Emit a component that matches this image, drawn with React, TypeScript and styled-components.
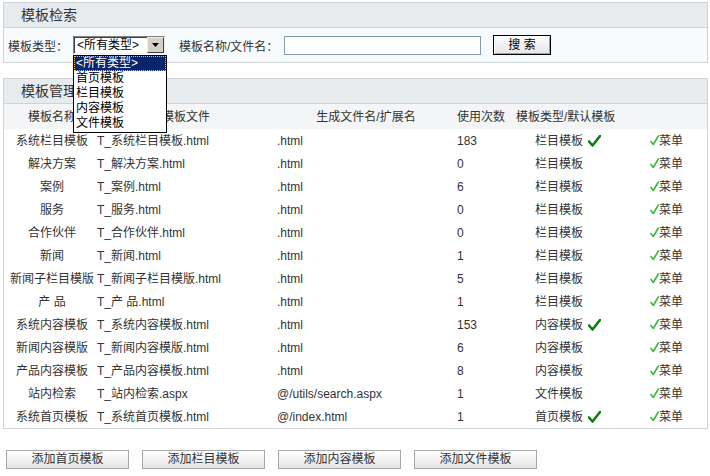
import { FC } from 'react';
import styled, { createGlobalStyle } from 'styled-components';

const GlobalStyle = createGlobalStyle`
  html, body {
    margin: 0;
    padding: 0;
    background: #fff;
  }
  body {
    font-family: 'Liberation Sans', Tahoma, 'Noto Sans CJK SC', sans-serif;
    font-size: 12px;
    color: #333;
  }
  * {
    box-sizing: border-box;
  }
`;

interface Template {
  name: string;
  file: string;
  ext: string;
  count: string;
  type: string;
  isDefault?: boolean;
}

const templates: Template[] = [
  { name: '系统栏目模板', file: 'T_系统栏目模板.html', ext: '.html', count: '183', type: '栏目模板', isDefault: true },
  { name: '解决方案', file: 'T_解决方案.html', ext: '.html', count: '0', type: '栏目模板' },
  { name: '案例', file: 'T_案例.html', ext: '.html', count: '6', type: '栏目模板' },
  { name: '服务', file: 'T_服务.html', ext: '.html', count: '0', type: '栏目模板' },
  { name: '合作伙伴', file: 'T_合作伙伴.html', ext: '.html', count: '0', type: '栏目模板' },
  { name: '新闻', file: 'T_新闻.html', ext: '.html', count: '1', type: '栏目模板' },
  { name: '新闻子栏目模版', file: 'T_新闻子栏目模版.html', ext: '.html', count: '5', type: '栏目模板' },
  { name: '产 品', file: 'T_产 品.html', ext: '.html', count: '1', type: '栏目模板' },
  { name: '系统内容模板', file: 'T_系统内容模板.html', ext: '.html', count: '153', type: '内容模板', isDefault: true },
  { name: '新闻内容模版', file: 'T_新闻内容模版.html', ext: '.html', count: '6', type: '内容模板' },
  { name: '产品内容模板', file: 'T_产品内容模板.html', ext: '.html', count: '8', type: '内容模板' },
  { name: '站内检索', file: 'T_站内检索.aspx', ext: '@/utils/search.aspx', count: '1', type: '文件模板' },
  { name: '系统首页模板', file: 'T_系统首页模板.html', ext: '@/index.html', count: '1', type: '首页模板', isDefault: true },
];

const typeOptions = ['<所有类型>', '首页模板', '栏目模板', '内容模板', '文件模板'];

const BigCheck: FC = () => (
  <svg width="13" height="12" viewBox="0 0 13 12">
    <path d="M1 6.5 L4.5 10.5 L12 1" fill="none" stroke="#0c800c" strokeWidth="2.6" strokeLinecap="round" strokeLinejoin="round" />
  </svg>
);

const SmallCheck: FC = () => (
  <svg width="9" height="11" viewBox="0 0 9 11">
    <path d="M1 6.5 L3.3 9.5 L8.3 1" fill="none" stroke="#3cb83c" strokeWidth="1.6" strokeLinecap="round" strokeLinejoin="round" />
  </svg>
);

const App: FC = () => {
  return (
    <>
      <GlobalStyle />
      <Page>
        <Panel>
          <PanelHeader>模板检索</PanelHeader>
          <SearchBar>
            <Label $w={65}>模板类型：</Label>
            <SelectWrap>
              <SelectBox>
                <SelectValue>&lt;所有类型&gt;</SelectValue>
                <SelectArrow>
                  <svg width="7" height="4" viewBox="0 0 7 4">
                    <path d="M0 0 H7 L3.5 4 Z" fill="#000" />
                  </svg>
                </SelectArrow>
              </SelectBox>
              <OptionList>
                {typeOptions.map((opt, i) => (
                  <OptionItem key={opt} $active={i === 0}>
                    {opt}
                  </OptionItem>
                ))}
              </OptionList>
            </SelectWrap>
            <Label $w={105} $gap={14}>模板名称/文件名：</Label>
            <TextInput />
            <SearchBtn>搜 索</SearchBtn>
          </SearchBar>
        </Panel>

        <Panel $top={15}>
          <PanelHeader>模板管理</PanelHeader>
          <Table>
            <colgroup>
              <col style={{ width: 92 }} />
              <col style={{ width: 180 }} />
              <col style={{ width: 180 }} />
              <col style={{ width: 60 }} />
              <col style={{ width: 130 }} />
              <col />
            </colgroup>
            <thead>
              <tr>
                <Th $align="center" $pl={4}>模板名称</Th>
                <Th $align="center">模板文件</Th>
                <Th $align="center">生成文件名/扩展名</Th>
                <Th $pl={1}>使用次数</Th>
                <Th>模板类型/默认模板</Th>
                <Th />
              </tr>
            </thead>
            <tbody>
              {templates.map((t) => (
                <tr key={t.name}>
                  <Td $align="center" $pl={4}>{t.name}</Td>
                  <Td $pl={1}>{t.file}</Td>
                  <Td $pl={1}>{t.ext}</Td>
                  <Td $pl={1}>{t.count}</Td>
                  <Td $pl={19}>
                    <TypeCell>
                      {t.type}
                      {t.isDefault && <BigCheck />}
                    </TypeCell>
                  </Td>
                  <Td $pl={4}>
                    <MenuLink>
                      <SmallCheck />
                      菜单
                    </MenuLink>
                  </Td>
                </tr>
              ))}
            </tbody>
          </Table>
        </Panel>

        <ButtonBar>
          <AddBtn>添加首页模板</AddBtn>
          <AddBtn>添加栏目模板</AddBtn>
          <AddBtn>添加内容模板</AddBtn>
          <AddBtn>添加文件模板</AddBtn>
        </ButtonBar>
      </Page>
    </>
  );
};

const Page = styled.div`
  width: 710px;
  padding: 2px 3px 0 3px;
`;

const Panel = styled.div<{ $top?: number }>`
  width: 705px;
  border: 1px solid #cfd3d6;
  margin-top: ${({ $top }) => $top ?? 0}px;
  background: #fff;
`;

const PanelHeader = styled.div`
  height: 25px;
  line-height: 24px;
  padding-left: 17px;
  font-size: 14px;
  color: #333;
  background: #e8ebee;
  border-bottom: 1px solid #cfd3d6;
`;

const SearchBar = styled.div`
  height: 34px;
  display: flex;
  align-items: center;
  padding-left: 4px;
  background: #f7fbfd;
`;

const Label = styled.span<{ $gap?: number; $w: number }>`
  flex: none;
  width: ${({ $w }) => $w}px;
  font-size: 12px;
  color: #333;
  margin-left: ${({ $gap }) => $gap ?? 0}px;
  white-space: nowrap;
`;

const SelectWrap = styled.div`
  position: relative;
  flex: none;
  width: 92px;
  height: 18px;
`;

const SelectBox = styled.div`
  display: flex;
  width: 92px;
  height: 18px;
  border-top: 1px solid #808080;
  border-left: 1px solid #808080;
  border-right: 1px solid #f0f0f0;
  border-bottom: 1px solid #f0f0f0;
  box-shadow: inset 1px 1px 0 #404040;
  background: #fff;
`;

const SelectValue = styled.div`
  flex: 1;
  padding-left: 3px;
  line-height: 16px;
  font-size: 12px;
  color: #000;
  white-space: nowrap;
`;

const SelectArrow = styled.div`
  width: 17px;
  height: 16px;
  background: #d4d0c8;
  border-top: 1px solid #f0f0f0;
  border-left: 1px solid #f0f0f0;
  border-right: 1px solid #404040;
  border-bottom: 1px solid #404040;
  display: flex;
  align-items: center;
  justify-content: center;
`;

const OptionList = styled.div`
  position: absolute;
  top: 19px;
  left: 0;
  width: 94px;
  border: 1px solid #000;
  background: #fff;
  z-index: 10;
  padding-bottom: 1px;
`;

const OptionItem = styled.div<{ $active?: boolean }>`
  height: 15px;
  line-height: 15px;
  padding-left: 2px;
  font-size: 12px;
  white-space: nowrap;
  color: ${({ $active }) => ($active ? '#fff' : '#000')};
  background: ${({ $active }) => ($active ? '#0a246a' : '#fff')};
  outline: ${({ $active }) => ($active ? '1px dotted #f0c060' : 'none')};
  outline-offset: -1px;
`;

const TextInput = styled.input`
  flex: none;
  width: 197px;
  height: 19px;
  border: 1px solid #7f9db9;
  background: #fff;
  padding: 0 2px;
  font-size: 12px;
`;

const SearchBtn = styled.button`
  flex: none;
  width: 58px;
  height: 20px;
  margin-left: 12px;
  padding: 0;
  border: 1px solid #000;
  box-shadow: inset 1px 1px 0 #fff, inset -1px -1px 0 #a0a0a0;
  background: linear-gradient(#fdfdfd, #e6e6e6);
  font-family: 'Liberation Sans', 'Noto Sans CJK SC', sans-serif;
  font-size: 12px;
  color: #000;
  line-height: 16px;
`;

const Table = styled.table`
  width: 100%;
  border-collapse: collapse;
  table-layout: fixed;
  font-size: 12px;
  color: #333;

  thead tr {
    height: 25px;
    background: #f3f5f7;
  }

  tbody tr {
    height: 23px;
  }
`;

const Th = styled.th<{ $align?: string; $pl?: number }>`
  font-weight: normal;
  text-align: ${({ $align }) => $align ?? 'left'};
  padding: 0 0 0 ${({ $pl }) => $pl ?? 0}px;
  white-space: nowrap;
  overflow: visible;
  line-height: 16px;
`;

const Td = styled.td<{ $align?: string; $pl?: number }>`
  height: 23px;
  text-align: ${({ $align }) => $align ?? 'left'};
  padding: 0 0 0 ${({ $pl }) => $pl ?? 0}px;
  white-space: nowrap;
  overflow: visible;
  line-height: 16px;
  vertical-align: middle;
`;

const TypeCell = styled.div`
  display: flex;
  align-items: center;
  height: 16px;
  gap: 5px;
`;

const MenuLink = styled.div`
  display: flex;
  align-items: center;
  height: 16px;
  cursor: pointer;
`;

const ButtonBar = styled.div`
  display: flex;
  gap: 13px;
  margin-top: 21px;
  padding-left: 3px;
`;

const AddBtn = styled.button`
  flex: none;
  width: 123px;
  height: 19px;
  padding: 0;
  border: 1px solid #a7a7a7;
  background: linear-gradient(#ffffff, #e4e4e4);
  font-family: 'Liberation Sans', 'Noto Sans CJK SC', sans-serif;
  font-size: 12px;
  color: #333;
  line-height: 17px;
`;

export default App;
